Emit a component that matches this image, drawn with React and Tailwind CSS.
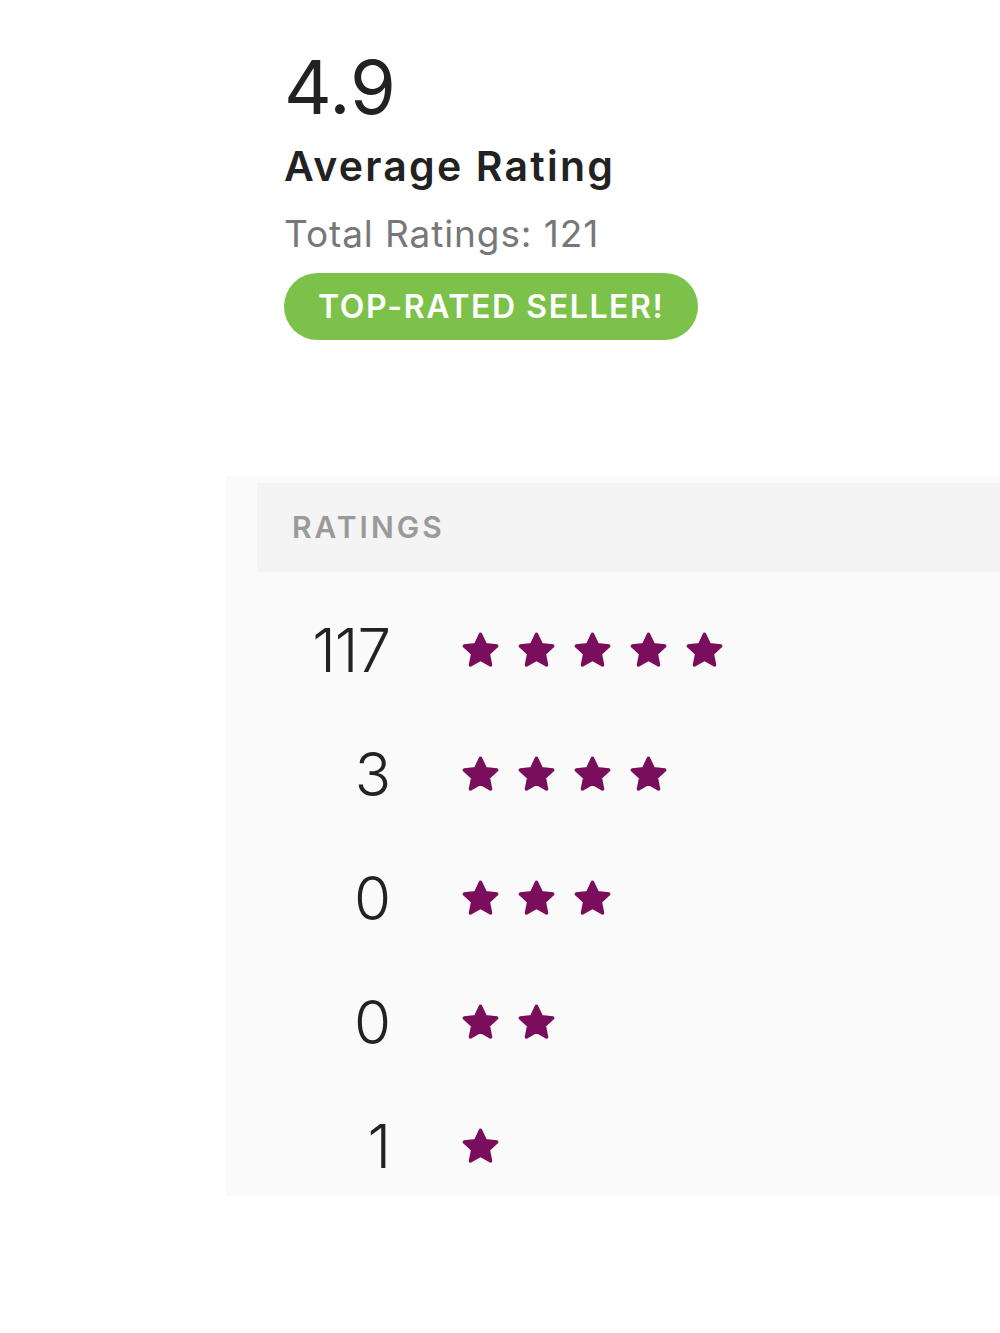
import React from 'react';

const ratings = [
  { count: 117, stars: 5 },
  { count: 3, stars: 4 },
  { count: 0, stars: 3 },
  { count: 0, stars: 2 },
  { count: 1, stars: 1 },
];

const Star = () => (
  <svg width="41" height="41" viewBox="0 0 24 24" fill="#7b0e5c" stroke="#7b0e5c" strokeWidth="2" strokeLinejoin="round">
    <path d="M12 2.5l2.9 6.1 6.6.8-4.9 4.5 1.3 6.6L12 17.2l-5.9 3.3 1.3-6.6-4.9-4.5 6.6-.8z" />
  </svg>
);

const App = () => {
  return (
    <div className="min-h-screen bg-white" style={{ fontFamily: 'Inter, "Noto Sans", sans-serif' }}>
      {/* Summary */}
      <div className="pl-[284px] pt-[50px]">
        <div className="text-[74px] leading-none text-[#222] font-normal">4.9</div>
        <div className="mt-[22px] text-[41px] leading-none font-semibold text-[#222] tracking-[2.2px]">Average Rating</div>
        <div className="mt-[28px] text-[37px] leading-none text-[#777] tracking-[0.9px]">Total Ratings: 121</div>
        <div className="mt-[21px] inline-flex items-center h-[67px] px-[34px] rounded-full bg-[#7cc24a] text-white text-[32px] font-semibold tracking-[1.6px]">
          TOP-RATED SELLER!
        </div>
      </div>

      {/* Ratings panel */}
      <div className="mt-[136px] ml-[226px] bg-[#fafafa] pt-[7px] pb-[20px]">
        <div className="ml-[31px] h-[89px] bg-[#f4f4f4] flex items-center pl-[35px]">
          <span className="text-[30px] font-semibold tracking-[3px] text-[#9a9a9a]">RATINGS</span>
        </div>
        <div className="pt-[48px] flex flex-col gap-[64px]">
          {ratings.map((r, i) => (
            <div key={i} className="flex items-center h-[60px]">
              <div className="w-[164px] text-right text-[60px] leading-none font-light text-[#222] tracking-[-1px]">{r.count}</div>
              <div className="ml-[70px] flex gap-[15px]">
                {Array.from({ length: r.stars }).map((_, j) => (
                  <Star key={j} />
                ))}
              </div>
            </div>
          ))}
        </div>
      </div>
    </div>
  );
};

export default App;
